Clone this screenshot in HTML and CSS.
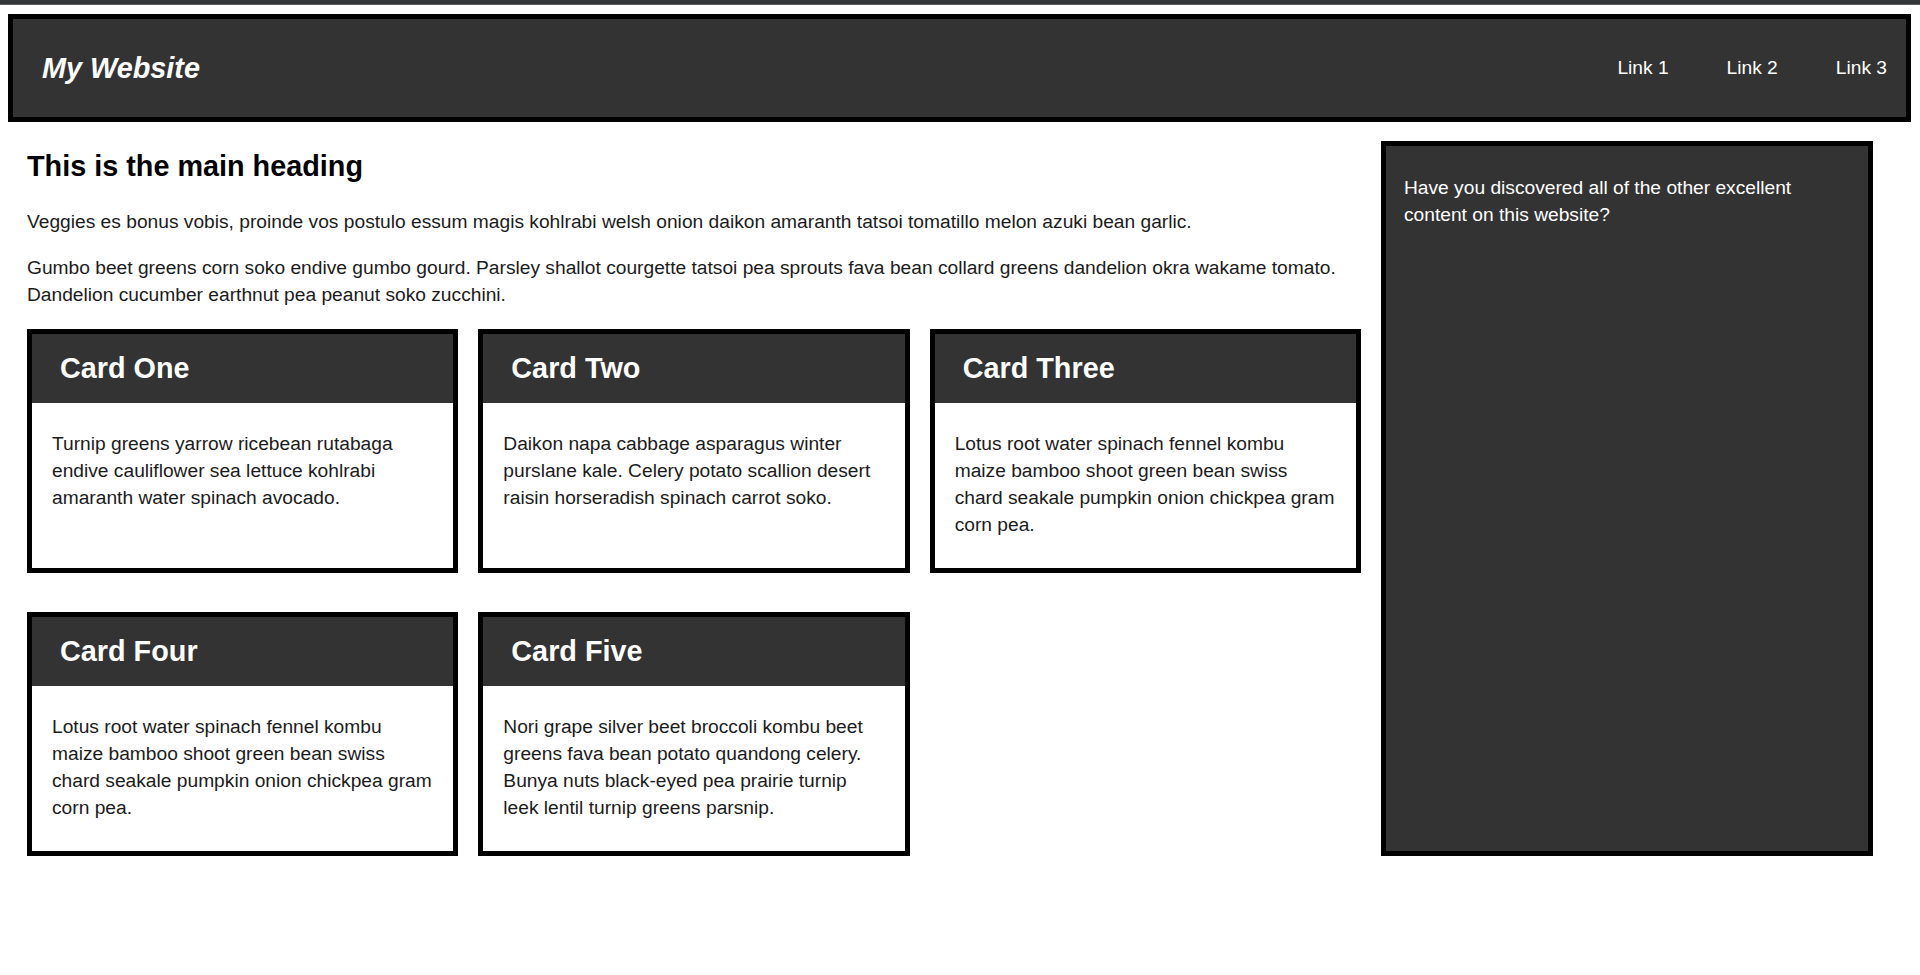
FILE: index.html
```html
<!DOCTYPE html>
<html lang="en">
<head>
<meta charset="utf-8">
<title>My Website</title>
<link rel="stylesheet" href="styles.css">
</head>
<body>
<div class="topband"></div>
<header class="site-header">
  <div class="logo">My Website</div>
  <nav class="nav">
    <a href="#">Link 1</a>
    <a href="#">Link 2</a>
    <a href="#">Link 3</a>
  </nav>
</header>
<div class="layout">
  <main class="main">
    <h1 class="main-heading">This is the main heading</h1>
    <p class="text">Veggies es bonus vobis, proinde vos postulo essum magis kohlrabi welsh onion daikon amaranth tatsoi tomatillo melon azuki bean garlic.</p>
    <p class="text">Gumbo beet greens corn soko endive gumbo gourd. Parsley shallot courgette tatsoi pea sprouts fava bean collard greens dandelion okra wakame tomato. Dandelion cucumber earthnut pea peanut soko zucchini.</p>
    <div class="cards">
      <article class="card">
        <div class="card-head"><h2 class="card-title">Card One</h2></div>
        <div class="card-body"><p>Turnip greens yarrow ricebean rutabaga endive cauliflower sea lettuce kohlrabi amaranth water spinach avocado.</p></div>
      </article>
      <article class="card">
        <div class="card-head"><h2 class="card-title">Card Two</h2></div>
        <div class="card-body"><p>Daikon napa cabbage asparagus winter purslane kale. Celery potato scallion desert raisin horseradish spinach carrot soko.</p></div>
      </article>
      <article class="card">
        <div class="card-head"><h2 class="card-title">Card Three</h2></div>
        <div class="card-body"><p>Lotus root water spinach fennel kombu maize bamboo shoot green bean swiss chard seakale pumpkin onion chickpea gram corn pea.</p></div>
      </article>
      <article class="card">
        <div class="card-head"><h2 class="card-title">Card Four</h2></div>
        <div class="card-body"><p>Lotus root water spinach fennel kombu maize bamboo shoot green bean swiss chard seakale pumpkin onion chickpea gram corn pea.</p></div>
      </article>
      <article class="card">
        <div class="card-head"><h2 class="card-title">Card Five</h2></div>
        <div class="card-body"><p>Nori grape silver beet broccoli kombu beet greens fava bean potato quandong celery. Bunya nuts black-eyed pea prairie turnip leek lentil turnip greens parsnip.</p></div>
      </article>
    </div>
  </main>
  <aside class="sidebar">
    <p>Have you discovered all of the other excellent content on this website?</p>
  </aside>
</div>
</body>
</html>
```

FILE: styles.css
```css
html, body {
  margin: 0;
  padding: 0;
  background: #fff;
}

body {
  font-family: "Liberation Sans", Arial, sans-serif;
  font-size: 19.2px;
  line-height: 1.4;
  color: #1b1b1b;
}

.topband {
  height: 4px;
  background: #35363a;
  border-bottom: 1px solid #5c5c60;
}

.site-header {
  margin: 9px 9px 0 8px;
  height: 98px;
  border: 5px solid #000;
  background: #333;
  color: #fff;
  display: flex;
  align-items: center;
  justify-content: space-between;
  padding: 0 19px 0 29px;
}

.logo {
  font-size: 28.8px;
  font-weight: bold;
  font-style: italic;
  line-height: 1;
}

.nav {
  display: flex;
  gap: 58px;
}

.nav a {
  color: #fff;
  text-decoration: none;
  font-size: 19.2px;
}

.layout {
  display: grid;
  grid-template-columns: 1fr 492px;
  column-gap: 20px;
  margin-top: 19px;
  padding: 0 47px 0 27px;
}

.main-heading {
  font-size: 28.8px;
  line-height: 1.4;
  margin: 5px 0 22.7px;
  color: #000;
}

.text {
  margin: 19.2px 0;
}

.cards {
  display: grid;
  grid-template-columns: repeat(3, 1fr);
  column-gap: 20px;
  row-gap: 39px;
  margin-top: 20px;
}

.card {
  border: 5px solid #000;
  background: #fff;
}

.card-head {
  background: #333;
  padding: 18px 28px;
}

.card-title {
  margin: 0;
  font-size: 28.8px;
  line-height: normal;
  color: #fff;
}

.card-body {
  padding: 9px 20px 10px;
}

.card-body p {
  margin: 19.2px 0;
}

.sidebar {
  background: #333;
  border: 5px solid #000;
  color: #fff;
  padding: 10px 18px 8px;
}

.sidebar p {
  margin: 19.2px 0;
}
```
